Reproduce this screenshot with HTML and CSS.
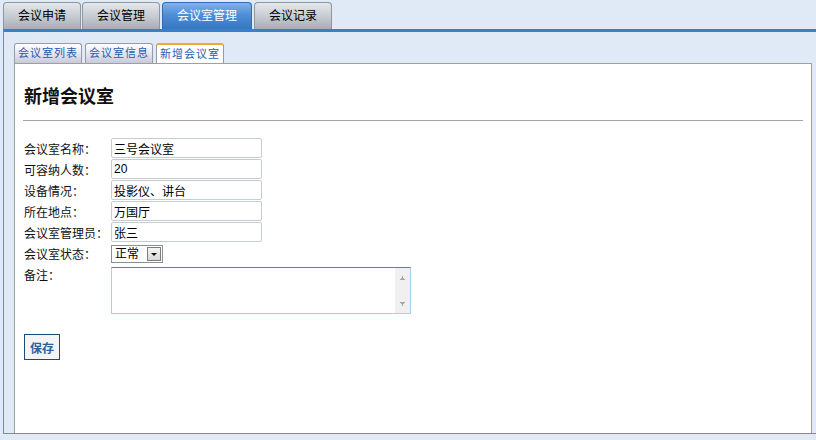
FILE: index.html
```html
<!DOCTYPE html>
<html lang="zh-CN">

<head>
    <meta charset="utf-8">
    <title>会议室管理</title>
    <link rel="stylesheet" href="styles.css">
</head>

<body>
    <!-- Top navigation -->
    <div class="main-tabs">
        <a class="main-tab" href="#">会议申请</a>
        <a class="main-tab" href="#">会议管理</a>
        <a class="main-tab active" href="#">会议室管理</a>
        <a class="main-tab" href="#">会议记录</a>
    </div>

    <div class="frame">
        <div class="sub-tabs">
            <a class="sub-tab" href="#">会议室列表</a>
            <a class="sub-tab" href="#">会议室信息</a>
            <a class="sub-tab active" href="#">新增会议室</a>
        </div>

        <div class="panel">
            <h2>新增会议室</h2>
            <hr>
            <form class="room-form">
                <label>会议室名称：</label>
                <input type="text" class="text-input" value="三号会议室">

                <label>可容纳人数：</label>
                <input type="text" class="text-input" value="20">

                <label>设备情况：</label>
                <input type="text" class="text-input" value="投影仪、讲台">

                <label>所在地点：</label>
                <input type="text" class="text-input" value="万国厅">

                <label>会议室管理员：</label>
                <input type="text" class="text-input" value="张三">

                <label>会议室状态：</label>
                <div class="select-wrap">
                    <select class="status-select">
                        <option>正常</option>
                        <option>停用</option>
                    </select>
                    <span class="select-btn"></span>
                </div>

                <label class="top-label">备注：</label>
                <textarea class="remark"></textarea>
            </form>

            <button class="save-btn">保存</button>
        </div>
    </div>
</body>

</html>
```

FILE: styles.css
```css
body {
    margin: 0;
    overflow: hidden;
    background-color: #dfeaf6;
    font-family: "Liberation Sans", "Noto Sans CJK SC", sans-serif;
    font-size: 12px;
    color: #000;
}

/* Top tabs */
.main-tabs {
    display: flex;
    gap: 1px;
    padding: 2px 0 0 3px;
}

.main-tab {
    display: block;
    height: 26px;
    line-height: 26px;
    padding: 0 14px;
    font-size: 12px;
    color: #000;
    text-decoration: none;
    border: 1px solid #8f969f;
    border-bottom: none;
    border-radius: 4px 4px 0 0;
    background: linear-gradient(#e4e7eb, #c5cad0 55%, #a6adb6);
}

.main-tab.active {
    margin: 0 1px;
    color: #fff;
    border-color: #2f6db5;
    background: linear-gradient(#7fb3ea, #4d8fd8 45%, #3776c2);
}

/* Frame under the tabs */
.frame {
    margin-left: 3px;
    padding: 11px 0 0 10px;
    border-top: 3px solid #3a80c8;
    border-left: 1px solid #5a92cf;
    border-bottom: 1px solid #5a92cf;
}

.sub-tabs {
    display: flex;
    gap: 3px;
}

.sub-tab {
    display: block;
    height: 19px;
    line-height: 19px;
    padding: 0 3px;
    font-size: 11px;
    letter-spacing: 1px;
    color: #1f5cb0;
    text-decoration: none;
    border: 1px solid #9a9aa6;
    border-bottom: none;
    border-radius: 3px 3px 0 0;
    background: linear-gradient(#ffffff, #e6e6ef 50%, #c9c9d8);
}

.sub-tab.active {
    height: 18px;
    border-top: 2px solid #f0a830;
    background: #fff;
    margin-bottom: -1px;
    position: relative;
}

.panel {
    height: 369px;
    margin-right: 4px;
    padding: 0 8px;
    background-color: #fff;
    border: 1px solid #9f9f9f;
    border-bottom: none;
}

h2 {
    margin: 21px 0 0 1px;
    font-size: 18px;
    font-weight: bold;
    line-height: 24px;
    color: #111;
}

hr {
    margin: 11px 0 0 0;
    border: none;
    border-top: 1px solid #a5a5a5;
    height: 0;
}

/* Form */
.room-form {
    display: grid;
    grid-template-columns: 87px 300px;
    row-gap: 1px;
    margin: 17px 0 0 1px;
    align-items: center;
}

.room-form label {
    color: #111;
}

.top-label {
    align-self: start;
    padding-top: 1px;
}

.text-input {
    box-sizing: border-box;
    width: 151px;
    height: 20px;
    padding: 0 2px;
    font-family: "Liberation Sans", "Noto Sans CJK SC", sans-serif;
    font-size: 12px;
    color: #000;
    border: 1px solid #c6ccd3;
    border-radius: 2px;
    outline: none;
}

.select-wrap {
    position: relative;
    width: 52px;
    height: 18px;
    margin: 2px 0 1px 0;
}

.status-select {
    appearance: none;
    box-sizing: border-box;
    width: 52px;
    height: 18px;
    padding: 0 0 0 3px;
    font-family: "Liberation Sans", "Noto Sans CJK SC", sans-serif;
    font-size: 12px;
    color: #000;
    background: #fff;
    border: 1px solid #8e8e8e;
    border-radius: 0;
}

/* Dropdown button drawn over the select */
.select-btn {
    position: absolute;
    top: 2px;
    right: 2px;
    width: 14px;
    height: 14px;
    box-sizing: border-box;
    border: 1px solid #7c7c7c;
    background: linear-gradient(#f4f4f4, #d8d8d8);
    pointer-events: none;
}

.select-btn::after {
    content: "";
    position: absolute;
    left: 3px;
    top: 5px;
    border-left: 3px solid transparent;
    border-right: 3px solid transparent;
    border-top: 3px solid #111;
}

/* Textarea with a greyed-out scroll track painted on the right */
.remark {
    display: block;
    box-sizing: border-box;
    width: 300px;
    height: 47px;
    margin-top: 2px;
    padding-right: 18px;
    resize: none;
    overflow: hidden;
    border: 1px solid #a8d0e6;
    border-top-color: #4a86bf;
    outline: none;
    background:
        conic-gradient(from 150deg at 50% 0, #a8a8a8 60deg, transparent 0) right 4px top 8px / 7px 4px no-repeat,
        conic-gradient(from -30deg at 50% 100%, #a8a8a8 60deg, transparent 0) right 4px bottom 7px / 7px 4px no-repeat,
        linear-gradient(#f0f0f0, #f0f0f0) right top / 15px 100% no-repeat,
        #fff;
}

.save-btn {
    display: block;
    margin: 20px 0 0 1px;
    width: 36px;
    height: 26px;
    padding: 0;
    font-family: "Liberation Sans", "Noto Sans CJK SC", sans-serif;
    font-size: 12px;
    font-weight: bold;
    color: #2e629c;
    background-color: #f4f4f4;
    border: 1px solid #1c4a78;
    cursor: pointer;
}
```
